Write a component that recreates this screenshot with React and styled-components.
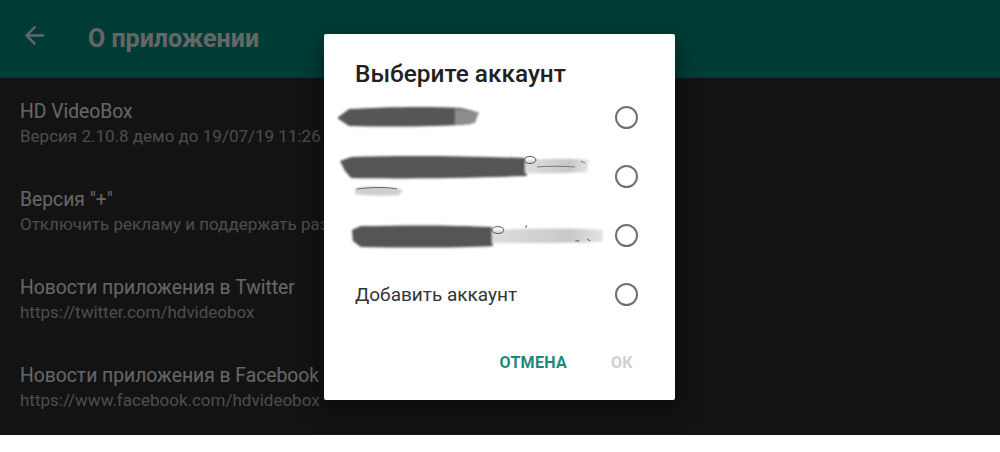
import styled, { createGlobalStyle } from "styled-components";

const GlobalStyle = createGlobalStyle`
	html, body {
		margin: 0;
		padding: 0;
		background: #fff;
		font-family: Roboto, "Noto Sans", "Liberation Sans", sans-serif;
	}
`;

const Screen = styled.div`
	position: relative;
	width: 1000px;
	height: 435px;
	overflow: hidden;
	background-color: #303030;
`;

const Toolbar = styled.header`
	height: 78px;
	display: flex;
	align-items: flex-start;
	background-color: #009688;
	color: #fff;

	.back {
		margin: 21px 0 0 20px;
		width: 29px;
		height: 29px;
	}

	.title {
		margin: 24px 0 0 39px;
		font-size: 25px;
		line-height: 29px;
		font-weight: 700;
	}
`;

const List = styled.div`
	padding-top: 1px;
`;

const Item = styled.div`
	padding: 20px 20px 19px;
	white-space: nowrap;

	.primary {
		font-size: 19.3px;
		line-height: 25px;
		color: #fff;
	}
	.secondary {
		font-size: 17px;
		line-height: 24px;
		color: rgba(255, 255, 255, 0.7);
	}
`;

const Scrim = styled.div`
	position: absolute;
	inset: 0;
	background: rgba(0, 0, 0, 0.6);
`;

const Dialog = styled.div`
	position: absolute;
	left: 324px;
	top: 34px;
	width: 351px;
	height: 366px;
	background: #fff;
	border-radius: 2px;
	box-shadow: 0 8px 24px rgba(0, 0, 0, 0.5);
	display: flex;
	flex-direction: column;
`;

const DialogTitle = styled.h2`
	margin: 0;
	padding: 26px 0 0 31px;
	font-size: 24.4px;
	line-height: 28px;
	font-weight: 500;
	color: #212121;
`;

const Option = styled.div`
	height: 59px;
	display: flex;
	align-items: center;
	justify-content: space-between;
	padding: 0 37px 0 31px;

	.label {
		font-size: 19px;
		color: #333;
	}
	svg {
		margin-left: -18px;
	}
`;

const Radio = styled.span`
	flex: none;
	width: 23px;
	height: 23px;
	box-sizing: border-box;
	border-radius: 50%;
	border: 2px solid #707070;
`;

const Buttons = styled.div`
	display: flex;
	justify-content: flex-end;
	gap: 44px;
	padding: 29px 42px 0 0;
`;

const TextButton = styled.button`
	border: 0;
	padding: 0;
	background: none;
	font-family: inherit;
	font-size: 16px;
	line-height: 20px;
	font-weight: 700;
	letter-spacing: 0.3px;
	color: ${(p) => (p.disabled ? "#cfcfcf" : "#1b8a7a")};
`;

const Blur = () => (
	<defs>
		<filter id="smudge" x="-10%" y="-30%" width="120%" height="160%">
			<feGaussianBlur stdDeviation="1.2" />
		</filter>
		<linearGradient id="fade" x1="0" x2="1" y1="0" y2="0">
			<stop offset="0" stopColor="#ddd" />
			<stop offset="0.7" stopColor="#c8c8c8" />
			<stop offset="1" stopColor="#e4e4e4" />
		</linearGradient>
	</defs>
);

// redacted e-mail addresses, drawn as paint smears
const Smear = ({ variant }) => {
	if (variant === 1)
		return (
			<svg width="180" height="59" viewBox="0 0 180 59">
				<Blur />
				<g filter="url(#smudge)">
					<path d="M0 30 L12 21 C45 19 90 18 124 20 L137 23 L134 36 C100 39 50 39 12 38 Z" fill="#565656" />
					<path d="M118 21 L142 24 L138 35 L118 37 Z" fill="#8d8d8d" />
				</g>
			</svg>
		);
	if (variant === 2)
		return (
			<svg width="270" height="59" viewBox="0 0 270 59">
				<Blur />
				<g filter="url(#smudge)">
					<path d="M3 14 L14 10 C60 8 130 9 188 11 L190 29 C130 31 60 32 14 31 L8 24 Z" fill="#555" />
					<path d="M188 13 C210 12 235 11 252 13 L250 25 C225 26 205 27 188 26 Z" fill="url(#fade)" />
					<path d="M18 41 C35 39 52 39 66 43 L62 48 C45 49 30 49 18 47 Z" fill="#cfcfcf" />
				</g>
				<ellipse cx="193" cy="13" rx="6" ry="3.5" fill="none" stroke="#555" strokeWidth="1" />
				<path d="M200 20 C210 19 225 19 238 20 M244 14 l4 2" stroke="#777" strokeWidth="1" fill="none" />
				<path d="M20 42 C35 40 50 40 60 42" stroke="#666" strokeWidth="1" fill="none" />
			</svg>
		);
	return (
		<svg width="280" height="59" viewBox="0 0 280 59">
			<Blur />
			<g filter="url(#smudge)">
				<path d="M15 24 L24 20 C70 19 120 19 156 21 L157 40 C120 42 70 42 24 41 L16 35 Z" fill="#555" />
				<path d="M156 24 C200 22 240 22 268 24 L267 36 C240 37 200 37 156 37 Z" fill="url(#fade)" />
			</g>
			<ellipse cx="162" cy="24" rx="6" ry="3.5" fill="none" stroke="#555" strokeWidth="1" />
			<path d="M190 22 l1 -3 M240 35 l4 0 M252 33 l3 2" stroke="#555" strokeWidth="1" fill="none" />
		</svg>
	);
};

const items = [
	{ title: "HD VideoBox", sub: "Версия 2.10.8 демо до 19/07/19 11:26" },
	{ title: 'Версия "+"', sub: "Отключить рекламу и поддержать разработчика" },
	{ title: "Новости приложения в Twitter", sub: "https://twitter.com/hdvideobox" },
	{ title: "Новости приложения в Facebook", sub: "https://www.facebook.com/hdvideobox" },
];

export default function App() {
	return (
		<>
			<GlobalStyle />
			<Screen>
				<Toolbar>
					<svg className="back" viewBox="0 0 24 24" fill="#fff">
						<path d="M20 11H7.83l5.59-5.59L12 4l-8 8 8 8 1.41-1.41L7.83 13H20v-2z" />
					</svg>
					<div className="title">О приложении</div>
				</Toolbar>
				<List>
					{items.map((it) => (
						<Item key={it.title}>
							<div className="primary">{it.title}</div>
							<div className="secondary">{it.sub}</div>
						</Item>
					))}
				</List>
				<Scrim />
				<Dialog>
					<DialogTitle>Выберите аккаунт</DialogTitle>
					{[1, 2, 3].map((n) => (
						<Option key={n}>
							<Smear variant={n} />
							<Radio />
						</Option>
					))}
					<Option>
						<span className="label">Добавить аккаунт</span>
						<Radio />
					</Option>
					<Buttons>
						<TextButton>ОТМЕНА</TextButton>
						<TextButton disabled>ОК</TextButton>
					</Buttons>
				</Dialog>
			</Screen>
		</>
	);
}
